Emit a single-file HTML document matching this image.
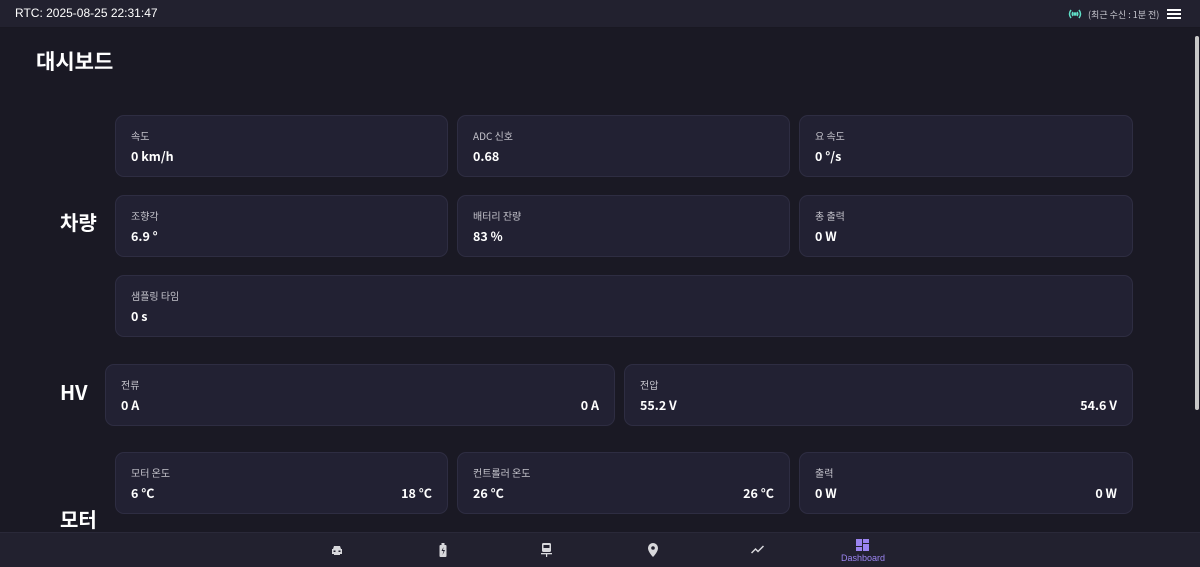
<!DOCTYPE html>
<html><head><meta charset="utf-8"><style>
*{margin:0;padding:0;box-sizing:border-box}
body{width:1200px;height:567px;overflow:hidden;background:#1a1924;font-family:"Liberation Sans","Noto Sans CJK KR",sans-serif;color:#fff;position:relative}
.top{position:absolute;left:0;top:0;width:1200px;height:28px;background:#22212f;border-bottom:1px solid #191822}
.rtc{position:absolute;left:15px;top:6px;font-size:12px;color:#fff}
.recv{position:absolute;left:1088px;top:8px;font-size:9px;color:#c8c8d0;font-family:"Noto Sans CJK KR",sans-serif}
.card{position:absolute;height:62px;background:#222133;border:1px solid #2e2d42;border-radius:9px;font-family:"Noto Sans CJK KR","Liberation Sans",sans-serif}
.card .l{position:absolute;left:15px;top:12px;font-size:10px;color:#c5c4cc}
.card .v{position:absolute;left:15px;top:30px;font-size:12.5px;font-weight:bold;color:#fff}
.card .r{position:absolute;right:15px;top:30px;font-size:12.5px;font-weight:bold;color:#fff}
.sec{position:absolute;font-size:20px;font-weight:bold;font-family:"Noto Sans CJK KR",sans-serif}
.nav{position:absolute;left:0;top:532px;width:1200px;height:35px;background:#22212f;border-top:1px solid #2a2939}
.sb{position:absolute;left:1195px;top:36px;width:4px;height:374px;background:#c8c8c8;border-radius:2px}
</style></head><body>
<div class="top">
<div class="rtc">RTC: 2025-08-25 22:31:47</div>
<svg style="position:absolute;left:1067px;top:8px" width="16" height="12" viewBox="0 0 16 12" fill="none" stroke="#5fe0c8" stroke-width="1.5"><path d="M4 2Q1 6 4 10M12 2Q15 6 12 10M6 4Q4.5 6 6 8M10 4Q11.5 6 10 8"/><circle cx="8" cy="6" r="1" fill="#5fe0c8"/></svg>
<div class="recv">(최근 수신 : 1분 전)</div>
<svg style="position:absolute;left:1167px;top:9px" width="14" height="10"><rect y="0" width="14" height="2" fill="#fff"/><rect y="4" width="14" height="2" fill="#fff"/><rect y="8" width="14" height="2" fill="#fff"/></svg>
</div>
<div class="sec" style="left:36px;top:46px;font-size:21px">대시보드</div>
<div class="sec" style="left:60px;top:207px">차량</div>
<div class="sec" style="left:60px;top:377px">HV</div>
<div class="sec" style="left:60px;top:504px">모터</div>

<div class="card" style="left:115px;top:115px;width:333px"><div class="l">속도</div><div class="v">0 km/h</div></div>
<div class="card" style="left:457px;top:115px;width:333px"><div class="l">ADC 신호</div><div class="v">0.68</div></div>
<div class="card" style="left:799px;top:115px;width:334px"><div class="l">요 속도</div><div class="v">0 °/s</div></div>
<div class="card" style="left:115px;top:195px;width:333px"><div class="l">조향각</div><div class="v">6.9 °</div></div>
<div class="card" style="left:457px;top:195px;width:333px"><div class="l">배터리 잔량</div><div class="v">83 %</div></div>
<div class="card" style="left:799px;top:195px;width:334px"><div class="l">총 출력</div><div class="v">0 W</div></div>
<div class="card" style="left:115px;top:275px;width:1018px"><div class="l">샘플링 타임</div><div class="v">0 s</div></div>
<div class="card" style="left:105px;top:364px;width:510px"><div class="l">전류</div><div class="v">0 A</div><div class="r">0 A</div></div>
<div class="card" style="left:624px;top:364px;width:509px"><div class="l">전압</div><div class="v">55.2 V</div><div class="r">54.6 V</div></div>
<div class="card" style="left:115px;top:452px;width:333px"><div class="l">모터 온도</div><div class="v">6 °C</div><div class="r">18 °C</div></div>
<div class="card" style="left:457px;top:452px;width:333px"><div class="l">컨트롤러 온도</div><div class="v">26 °C</div><div class="r">26 °C</div></div>
<div class="card" style="left:799px;top:452px;width:334px"><div class="l">출력</div><div class="v">0 W</div><div class="r">0 W</div></div>

<div class="sb"></div>
<div class="nav">
<svg style="position:absolute;left:331px;top:12px" width="12" height="11" viewBox="0 0 12 11" fill="#d8d8dc"><path d="M2 4L3 1h6l1 3h1v5h-2v1H3V9H1V4z"/><rect x="2.5" y="5.5" width="2" height="1.5" fill="#22212f"/><rect x="7.5" y="5.5" width="2" height="1.5" fill="#22212f"/></svg>
<svg style="position:absolute;left:439px;top:10px" width="8" height="14" viewBox="0 0 8 14" fill="#d8d8dc"><rect x="2.5" y="0" width="3" height="2"/><rect x="0.5" y="2" width="7" height="12" rx="1"/><path d="M4.5 4L2.5 8h2l-1 4 2.5-5h-2z" fill="#22212f"/></svg>
<svg style="position:absolute;left:541px;top:10px" width="11" height="14" viewBox="0 0 11 14" fill="#d8d8dc"><rect x="1" y="0" width="9" height="9" rx="1.5"/><rect x="2.5" y="2" width="6" height="3" fill="#22212f"/><rect x="0" y="10" width="11" height="1.3"/><rect x="5" y="10" width="1.2" height="4"/></svg>
<svg style="position:absolute;left:648px;top:10px" width="10" height="14" viewBox="0 0 10 14" fill="#d8d8dc"><path d="M5 0a5 5 0 0 1 5 5c0 4-5 9-5 9S0 9 0 5a5 5 0 0 1 5-5z"/><circle cx="5" cy="5" r="1.8" fill="#22212f"/></svg>
<svg style="position:absolute;left:751px;top:12px" width="13" height="9" viewBox="0 0 13 9" fill="none" stroke="#d8d8dc" stroke-width="1.5"><path d="M0.5 8L4.5 4L7 6.5L12.5 1"/></svg>
<svg style="position:absolute;left:856px;top:6px" width="13" height="12" viewBox="0 0 13 12" fill="#9b84f0"><rect x="0" y="0" width="6" height="7"/><rect x="7" y="0" width="6" height="4"/><rect x="0" y="8" width="6" height="4"/><rect x="7" y="5" width="6" height="7"/></svg>
<div style="position:absolute;left:841px;top:20px;font-size:9px;color:#9b84f0">Dashboard</div>
</div>
</body></html>
